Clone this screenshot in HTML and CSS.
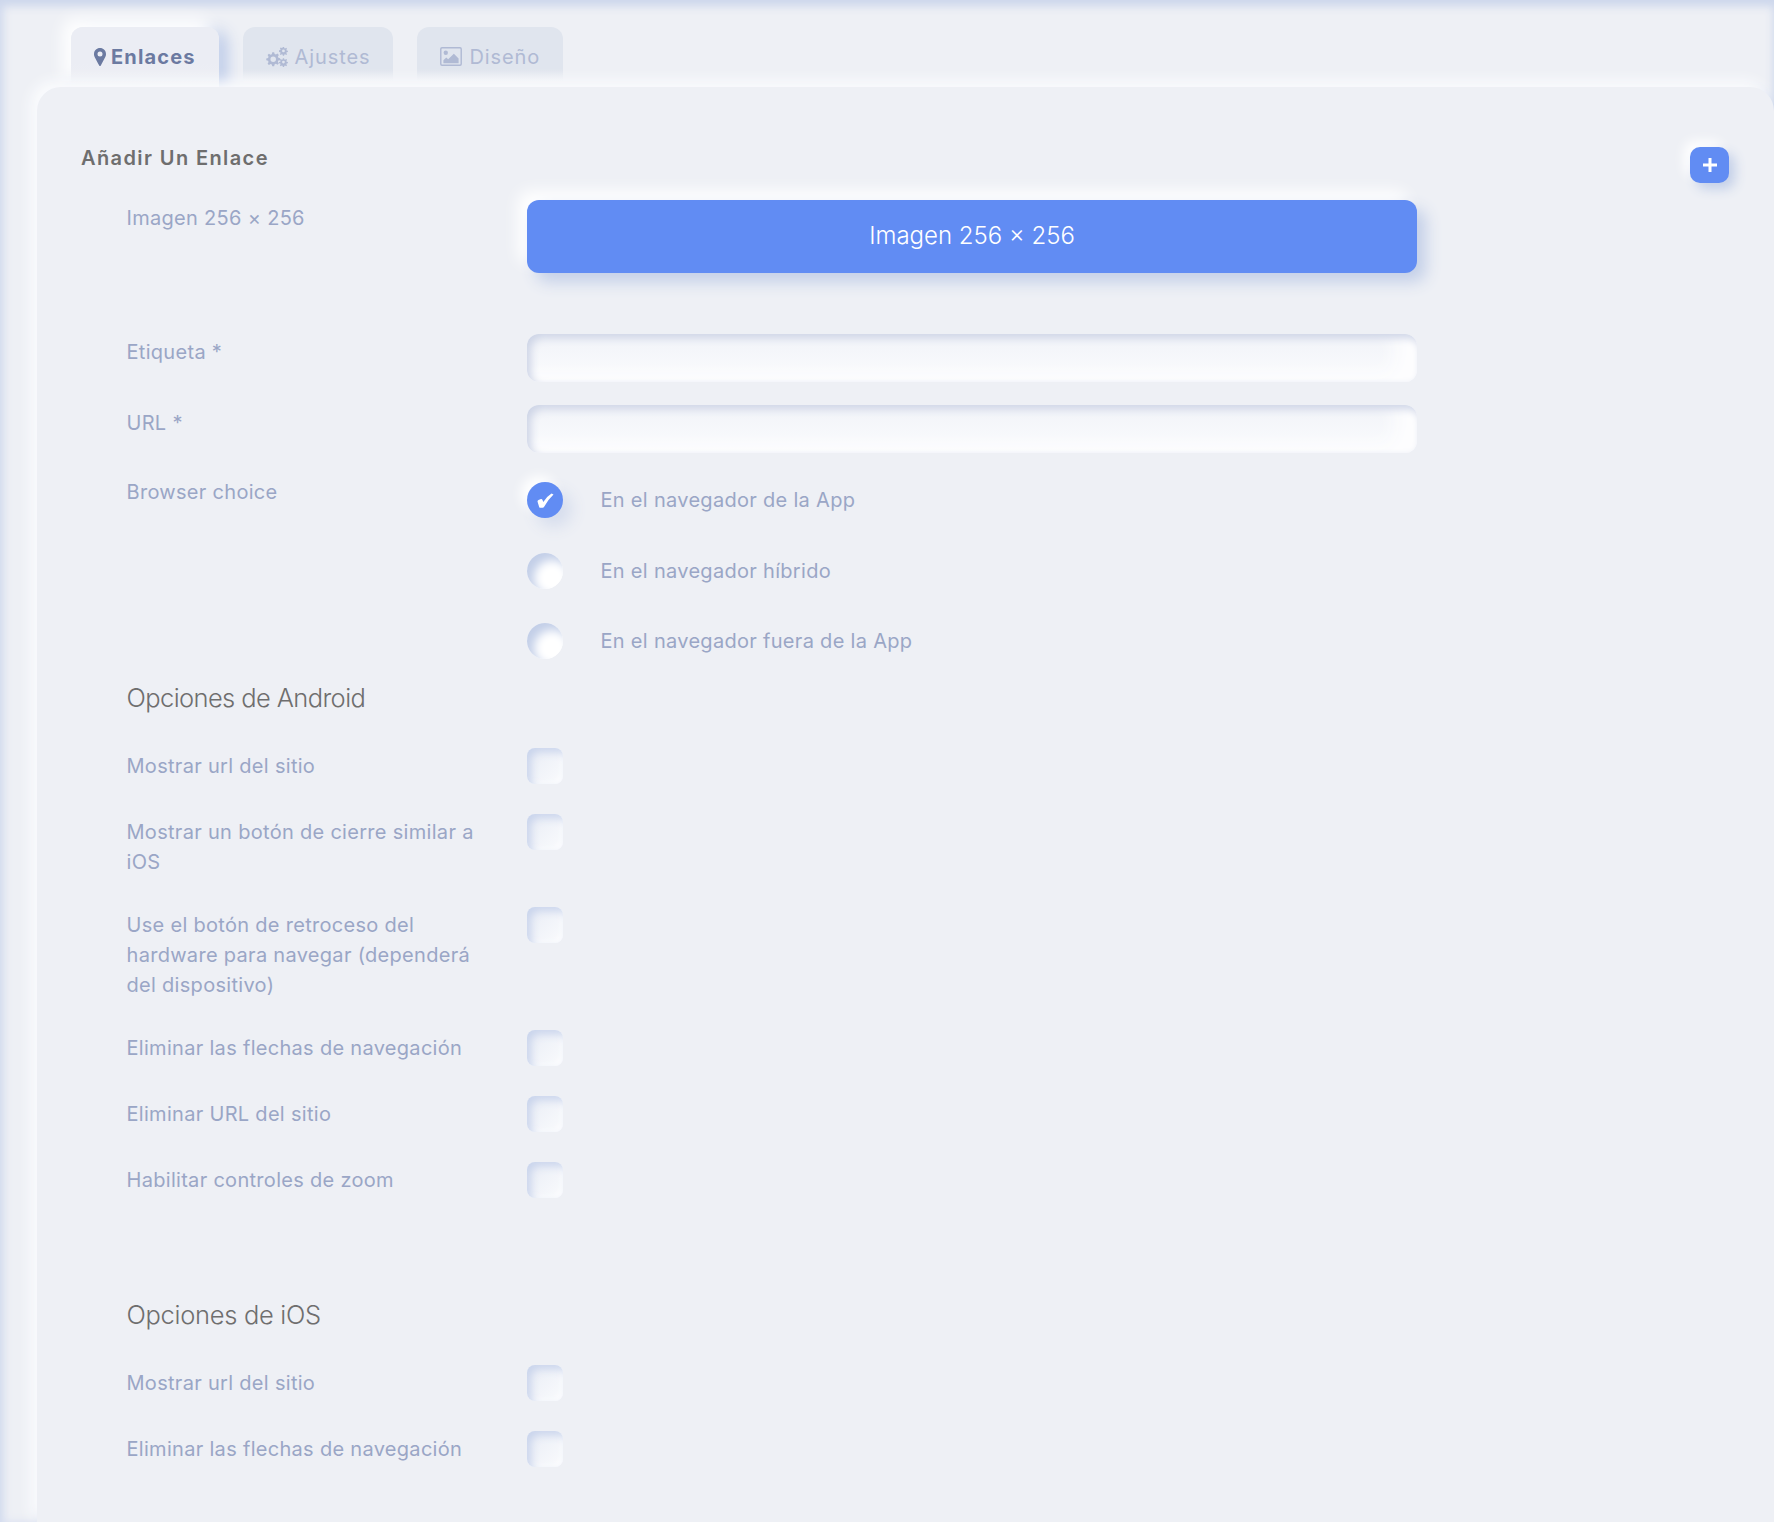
FILE: index.html
```html
<!DOCTYPE html>
<html lang="es">
<head>
<meta charset="utf-8">
<title>Enlaces</title>
<link rel="stylesheet" href="styles.css">
</head>
<body>
<div class="page">
  <nav class="tabs">
    <div class="tab tab-active">
      <svg class="ic ic-pin" viewBox="0 0 12 18"><path fill-rule="evenodd" d="M6 0C2.700 0 0 2.600 0 5.900c0 2.400.8 3.100 5.200 11.500.4.700 1.200.7 1.600 0C11.200 9 12 8.300 12 5.900 12 2.600 9.300 0 6 0zm0 8.500a2.500 2.500 0 1 1 0-5 2.500 2.500 0 0 1 0 5z"/></svg>
      <span>Enlaces</span>
    </div>
    <div class="tab tab-cogs">
      <svg class="ic ic-cogs" viewBox="0 0 24 21"><path fill-rule="evenodd" d="M6.500 5.500h2l.5 1.900 1.300.5 1.700-1 1.400 1.400-1 1.700.5 1.300 1.900.5v2l-1.900.5-.5 1.300 1 1.700-1.400 1.400-1.700-1-1.300.5-.5 1.900h-2L6 18.400l-1.300-.5-1.700 1L1.600 17.500l1-1.700-.5-1.300-1.900-.5v-2l1.900-.5.5-1.300-1-1.700L3 7.100l1.700 1 1.300-.5zm1 4.500a2.900 2.900 0 1 0 0 5.800 2.900 2.900 0 0 0 0-5.800z"/><path fill-rule="evenodd" d="M17.600 0h1.300l.3 1.300.8.300 1.100-.7.900.9-.7 1.100.3.800 1.300.3v1.300l-1.300.3-.3.800.7 1.100-.9.900-1.100-.7-.8.300-.3 1.300h-1.300l-.3-1.300-.8-.3-1.100.7-.9-.9.700-1.100-.3-.8-1.300-.3V3.500l1.300-.3.3-.8-.7-1.100.9-.9 1.100.7.800-.3zm.65 2.700a1.450 1.450 0 1 0 0 2.900 1.450 1.450 0 0 0 0-2.900z"/><path fill-rule="evenodd" d="M17.600 11.700h1.300l.3 1.300.8.300 1.100-.7.900.9-.7 1.100.3.800 1.300.3v1.300l-1.300.3-.3.800.7 1.100-.9.900-1.100-.7-.8.300-.3 1.300h-1.300l-.3-1.300-.8-.3-1.100.7-.9-.9.700-1.100-.3-.8-1.300-.3v-1.300l1.300-.3.3-.8-.7-1.100.9-.9 1.100.7.800-.3zm.65 2.700a1.450 1.450 0 1 0 0 2.900 1.450 1.450 0 0 0 0-2.900z"/></svg>
      <span>Ajustes</span>
    </div>
    <div class="tab tab-image">
      <svg class="ic ic-image" viewBox="0 0 23 20"><path fill-rule="evenodd" d="M2 0h19a2 2 0 0 1 2 2v16a2 2 0 0 1-2 2H2a2 2 0 0 1-2-2V2a2 2 0 0 1 2-2zm0 1.500a.5.500 0 0 0-.5.500v16a.5.500 0 0 0 .5.500h19a.5.500 0 0 0 .5-.5V2a.5.500 0 0 0-.5-.5z"/><circle cx="6" cy="6" r="2.300"/><path d="M3.500 17v-3l3-3 2 2 6-6 5 5v5z"/></svg>
      <span>Diseño</span>
    </div>
  </nav>

  <main class="card">
    <div class="card-head">
      <h2 class="card-title">Añadir Un Enlace</h2>
      <button class="add-btn" type="button" aria-label="Añadir">
        <svg viewBox="0 0 16 16"><path d="M6.500 1h3v5.500H15v3H9.500V15h-3V9.500H1v-3h5.500z"/></svg>
      </button>
    </div>

    <div class="field field-upload">
      <label class="lbl lbl-top">Imagen 256 × 256</label>
      <button class="upload" type="button">Imagen 256 × 256</button>
    </div>

    <div class="field field-input">
      <label class="lbl lbl-top">Etiqueta *</label>
      <div class="input"></div>
    </div>
    <div class="field field-input">
      <label class="lbl lbl-top">URL *</label>
      <div class="input"></div>
    </div>

    <div class="field field-radio">
      <label class="lbl lbl-radio">Browser choice</label>
      <div class="radios">
        <div class="radio-row">
          <span class="radio radio-on">
            <svg viewBox="0 0 17 15"><path d="M.5 8.500Q.3 7.500 1.500 7L4 6q1-.2 1.500 1l.8 2Q9 4 14.500.5l2 1Q11 6.500 7 14q-.5 1-2 .7H3q-.8 0-1-1.200z"/></svg>
          </span>
          <span class="radio-text">En el navegador de la App</span>
        </div>
        <div class="radio-row"><span class="radio"></span><span class="radio-text">En el navegador híbrido</span></div>
        <div class="radio-row"><span class="radio"></span><span class="radio-text">En el navegador fuera de la App</span></div>
      </div>
    </div>

    <h3 class="section-title">Opciones de Android</h3>
    <div class="checks">
      <div class="check-row"><label class="lbl">Mostrar url del sitio</label><span class="check"></span></div>
      <div class="check-row"><label class="lbl">Mostrar un botón de cierre similar a iOS</label><span class="check"></span></div>
      <div class="check-row"><label class="lbl">Use el botón de retroceso del hardware para navegar (dependerá del dispositivo)</label><span class="check"></span></div>
      <div class="check-row"><label class="lbl">Eliminar las flechas de navegación</label><span class="check"></span></div>
      <div class="check-row"><label class="lbl">Eliminar URL del sitio</label><span class="check"></span></div>
      <div class="check-row"><label class="lbl">Habilitar controles de zoom</label><span class="check"></span></div>
    </div>

    <h3 class="section-title section-ios">Opciones de iOS</h3>
    <div class="checks">
      <div class="check-row"><label class="lbl">Mostrar url del sitio</label><span class="check"></span></div>
      <div class="check-row"><label class="lbl">Eliminar las flechas de navegación</label><span class="check"></span></div>
    </div>
  </main>
</div>
</body>
</html>
```
FILE: styles.css
```css
* { box-sizing: border-box; }
html, body { margin: 0; height: 100%; }
body {
  background: #eef0f5;
  font-family: Inter, "Liberation Sans", sans-serif;
  overflow: hidden;
}
.page {
  height: 1522px;
  overflow: hidden;
  padding-top: 27px;
  padding-left: 37px;
  box-shadow: inset 0 6px 10px #cdd7ec, inset 4px 0 10px #dde3f2;
  display: flex;
  flex-direction: column;
}
.tabs {
  display: flex;
  gap: 24px;
  padding-left: 34px;
  height: 60px;
  flex: none;
}
.tab {
  height: 60px;
  padding: 0 23px 1px;
  display: flex;
  align-items: center;
  gap: 6px;
  border-radius: 12px 12px 0 0;
  background: linear-gradient(#e0e5ee 0, #e0e5ee 72%, #eef0f5 90%);
  color: #b0bad4;
  font-size: 20px;
  letter-spacing: .9px;
  white-space: nowrap;
}
.tab-active {
  gap: 5px;
  background: linear-gradient(#ebedf4 0, #ebedf4 60%, #eef0f5 100%);
  color: #6b7aa1;
  font-weight: 700;
  letter-spacing: 1.15px;
  box-shadow: -8px -8px 16px #fff, 8px 4px 16px #b9c8e8;
  clip-path: inset(-30px -30px 0 -30px);
}
.tab-image { gap: 7px; }
.ic { fill: currentColor; display: block; flex: none; }
.ic-pin { width: 12px; height: 18px; }
.ic-cogs { width: 23px; height: 20px; }
.ic-image { width: 22px; height: 19px; }
.card {
  position: relative;
  flex: 1;
  background: #eef0f5;
  border-radius: 24px 24px 0 0;
  padding: 56px 45px 0 44px;
  box-shadow: -6px -6px 14px #fbfcfe, 8px 8px 14px #c3cfe8;
}
.card-head {
  display: flex;
  justify-content: space-between;
  align-items: flex-start;
  height: 57px;
}
.card-title {
  margin: 0;
  font-size: 20px;
  line-height: 30px;
  font-weight: 600;
  color: #6e6e6e;
  letter-spacing: 1.4px;
}
.add-btn {
  margin: 4px 0 0 0;
  padding: 0;
  width: 39px;
  height: 36px;
  border: 0;
  border-radius: 10px;
  background: #618cf3;
  display: flex;
  align-items: center;
  justify-content: center;
  box-shadow: 6px 6px 12px #c3cfe8, -6px -6px 12px #fff;
}
.add-btn svg { width: 16px; height: 16px; fill: #fff; display: block; }
.field, .check-row {
  display: flex;
  padding-left: 45.500px;
}
.lbl {
  flex: none;
  width: 400.500px;
  padding-right: 40px;
  padding-top: 3px;
  font-size: 20px;
  line-height: 30px;
  letter-spacing: .3px;
  color: #9aa6c6;
}
.lbl-top { padding-top: 2.500px; }
.lbl-radio { padding-top: 1px; }
.field-upload { height: 134px; }
.upload {
  width: 890px;
  height: 73px;
  padding: 0 0 2px;
  border: 0;
  border-radius: 12px;
  background: #618cf3;
  color: #fff;
  font-family: inherit;
  font-size: 24px;
  font-weight: 300;
  box-shadow: 9px 9px 16px #c3cfe8, -9px -9px 16px #fff;
}
.field-input { height: 71px; }
.input {
  width: 890px;
  height: 48px;
  border-radius: 12px;
  background: linear-gradient(180deg, #f1f3f8 0%, #fbfcfe 100%);
  box-shadow: inset 4px 4px 8px #cdd4e6, inset -22px -6px 18px #fdfdfe;
}
.field-radio { height: 202px; }
.radios { display: flex; flex-direction: column; margin-top: 6px; }
.radio-row {
  height: 36px;
  display: flex;
  align-items: center;
  gap: 37.500px;
  margin-bottom: 34.500px;
  font-size: 20px;
  letter-spacing: .3px;
  color: #9aa6c6;
}
.radio {
  width: 36px;
  height: 36px;
  border-radius: 50%;
  flex: none;
  background: #fff;
  box-shadow: inset 7px 7px 10px #c3cfe8, inset -2px -2px 6px #fff;
}
.radio-on {
  background: #618cf3;
  display: flex;
  align-items: center;
  justify-content: center;
  box-shadow: 9px 9px 16px #d6dded, -6px -6px 12px #fff;
}
.radio-on svg { width: 17px; height: 15px; fill: #fff; display: block; }
.section-title {
  margin: 0 0 0 45.500px;
  font-size: 25.500px;
  line-height: 40px;
  font-weight: 300;
  letter-spacing: -.6px;
  color: #6e6e6e;
}
.section-ios { margin-top: 97px; letter-spacing: -.3px; }
.checks {
  display: flex;
  flex-direction: column;
  gap: 30px;
  margin-top: 30px;
}
.check {
  width: 36px;
  height: 36px;
  border-radius: 8px;
  flex: none;
  background: linear-gradient(135deg, #e8ecf5, #fafbfd);
  box-shadow: inset 4px 4px 8px #c9d4ec, inset -2px -2px 5px #fff;
}
```
